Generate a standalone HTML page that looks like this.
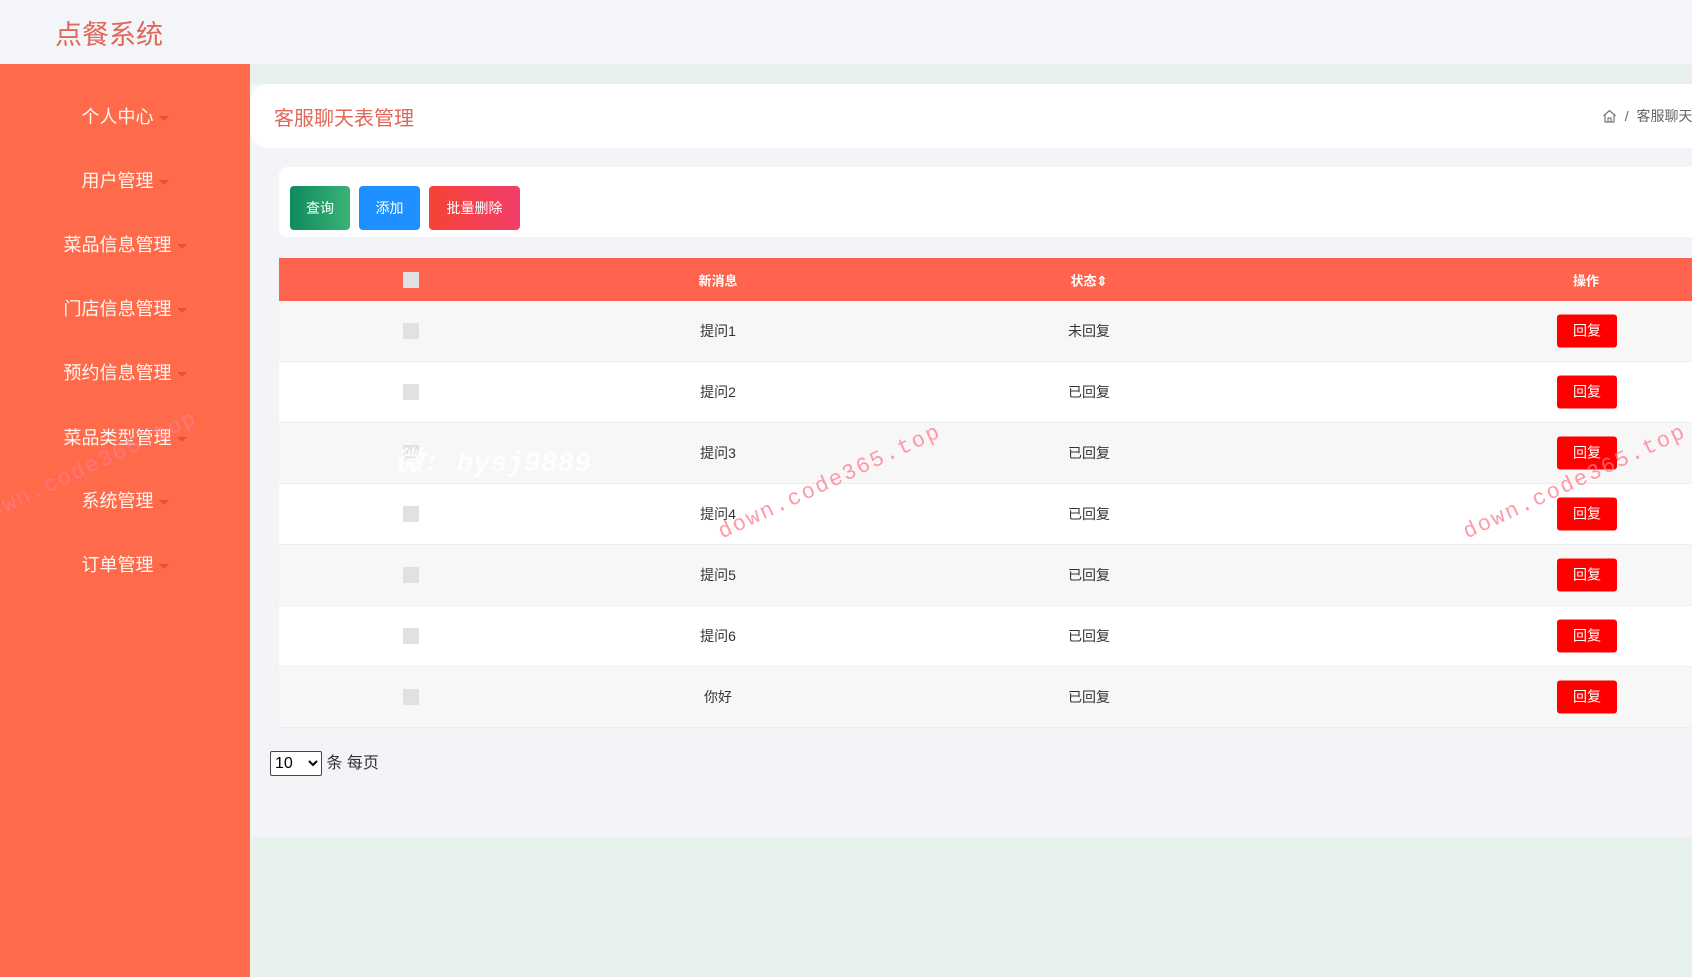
<!DOCTYPE html>
<html><head><meta charset="utf-8"><style>
*{margin:0;padding:0;box-sizing:border-box}
body{width:1692px;height:977px;overflow:hidden;background:#f3f4f7;font-family:"Liberation Sans","Noto Sans CJK SC",sans-serif;position:relative}
.hdr{position:absolute;left:0;top:0;width:1692px;height:64px;background:#f4f5f8}
.logo{position:absolute;left:55px;top:13px;font-size:27px;color:#e0675a}
.side{position:absolute;left:0;top:64px;width:250px;height:913px;background:#ff6b4a}
.mi{position:absolute;left:0;width:250px;text-align:center;color:#fff;font-size:18px;opacity:.95}
.mi:after{content:"";display:inline-block;margin-left:5px;vertical-align:middle;border-left:5px solid transparent;border-right:5px solid transparent;border-top:5px solid #d9553a}
.strip{position:absolute;left:250px;top:64px;right:0;height:20px;background:#e8f0ed}
.bottom{position:absolute;left:250px;top:837px;right:0;bottom:0;background:#e7f2ec}
.bc{position:absolute;left:250px;top:84px;width:1460px;height:64px;background:#fff;border-radius:18px 0 0 18px}
.bct{position:absolute;left:24px;top:18px;font-size:20px;color:#e0675a}
.bcr{position:absolute;left:1352px;top:22px;font-size:14px;color:#666;white-space:nowrap}
.tb{position:absolute;left:279px;top:167px;width:1430px;height:70px;background:#fff;border-radius:8px}
.btn{position:absolute;top:19px;height:44px;color:#fff;font-size:14px;line-height:44px;text-align:center;border-radius:4px}
.tbl{position:absolute;left:279px;top:258px;width:1430px;background:#fff}
.th{height:43px;background:#ff624d;position:relative;color:#fff;font-size:13px;font-weight:bold}
.row{height:61px;position:relative;font-size:14px;color:#333;border-bottom:1px solid #eee}
.row:nth-child(odd){background:#f7f7f7}
.c{position:absolute;top:50%;transform:translate(-50%,-50%);white-space:nowrap}
.cb{width:16px;height:16px;background:#e1e1e4}
.rb{background:#f00;color:#fff;width:60px;height:33px;line-height:33px;text-align:center;border-radius:3px;font-size:14px}
.wm{position:absolute;color:rgba(255,120,140,.75);font-size:22px;font-family:"Liberation Mono",monospace;transform:rotate(-25deg);transform-origin:left bottom;letter-spacing:2px}
</style></head><body>
<div class="hdr"><div class="logo">点餐系统</div></div>
<div class="side">
<div class="mi" style="top:39px">个人中心</div>
<div class="mi" style="top:103px">用户管理</div>
<div class="mi" style="top:167px">菜品信息管理</div>
<div class="mi" style="top:231px">门店信息管理</div>
<div class="mi" style="top:295px">预约信息管理</div>
<div class="mi" style="top:360px">菜品类型管理</div>
<div class="mi" style="top:423px">系统管理</div>
<div class="mi" style="top:487px">订单管理</div>
</div>
<div class="strip"></div>
<div class="bottom"></div>
<div class="bc"><div class="bct">客服聊天表管理</div>
<div class="bcr"><svg width="15" height="14" viewBox="0 0 15 14" style="vertical-align:-2px"><path d="M1.5 7L7.5 1.5 13.5 7M3 6v7h9V6M6 13V9h3v4" fill="none" stroke="#777" stroke-width="1.2"/></svg>&nbsp; / &nbsp;客服聊天表管理</div></div>
<div class="tb">
<div class="btn" style="left:11px;width:60px;background:linear-gradient(90deg,#0f8a5e,#3bb275)">查询</div>
<div class="btn" style="left:80px;width:61px;background:#1e90ff">添加</div>
<div class="btn" style="left:150px;width:91px;background:linear-gradient(90deg,#f44336,#f33e6a)">批量删除</div>
</div>
<div class="tbl">
<div class="th"><div class="c cb" style="left:132px"></div><div class="c" style="left:439px">新消息</div><div class="c" style="left:810px">状态⇕</div><div class="c" style="left:1307px">操作</div></div>
<div>
<div class="row"><div class="c cb" style="left:132px"></div><div class="c" style="left:439px">提问1</div><div class="c" style="left:810px">未回复</div><div class="c rb" style="left:1308px">回复</div></div>
<div class="row"><div class="c cb" style="left:132px"></div><div class="c" style="left:439px">提问2</div><div class="c" style="left:810px">已回复</div><div class="c rb" style="left:1308px">回复</div></div>
<div class="row"><div class="c cb" style="left:132px"></div><div class="c" style="left:439px">提问3</div><div class="c" style="left:810px">已回复</div><div class="c rb" style="left:1308px">回复</div></div>
<div class="row"><div class="c cb" style="left:132px"></div><div class="c" style="left:439px">提问4</div><div class="c" style="left:810px">已回复</div><div class="c rb" style="left:1308px">回复</div></div>
<div class="row"><div class="c cb" style="left:132px"></div><div class="c" style="left:439px">提问5</div><div class="c" style="left:810px">已回复</div><div class="c rb" style="left:1308px">回复</div></div>
<div class="row"><div class="c cb" style="left:132px"></div><div class="c" style="left:439px">提问6</div><div class="c" style="left:810px">已回复</div><div class="c rb" style="left:1308px">回复</div></div>
<div class="row"><div class="c cb" style="left:132px"></div><div class="c" style="left:439px">你好</div><div class="c" style="left:810px">已回复</div><div class="c rb" style="left:1308px">回复</div></div>
</div></div>
<div style="position:absolute;left:270px;top:749px;font-size:16px;color:#333"><select style="width:52px;height:25px;font-size:16px;border:1px solid #444;border-radius:2px;background:#fff"><option>10</option></select> 条 每页</div>
<div class="wm" style="left:-5px;top:500px">own.code365.top</div>
<div class="wm" style="left:725px;top:520px">down.code365.top</div>
<div class="wm" style="left:1470px;top:520px">down.code365.top</div>
<div style="position:absolute;left:395px;top:440px;font-size:28px;color:rgba(255,255,255,.85);font-style:italic;font-weight:bold;font-family:'Liberation Mono','Noto Sans CJK SC',monospace">微: bysj9889</div>
</body></html>
